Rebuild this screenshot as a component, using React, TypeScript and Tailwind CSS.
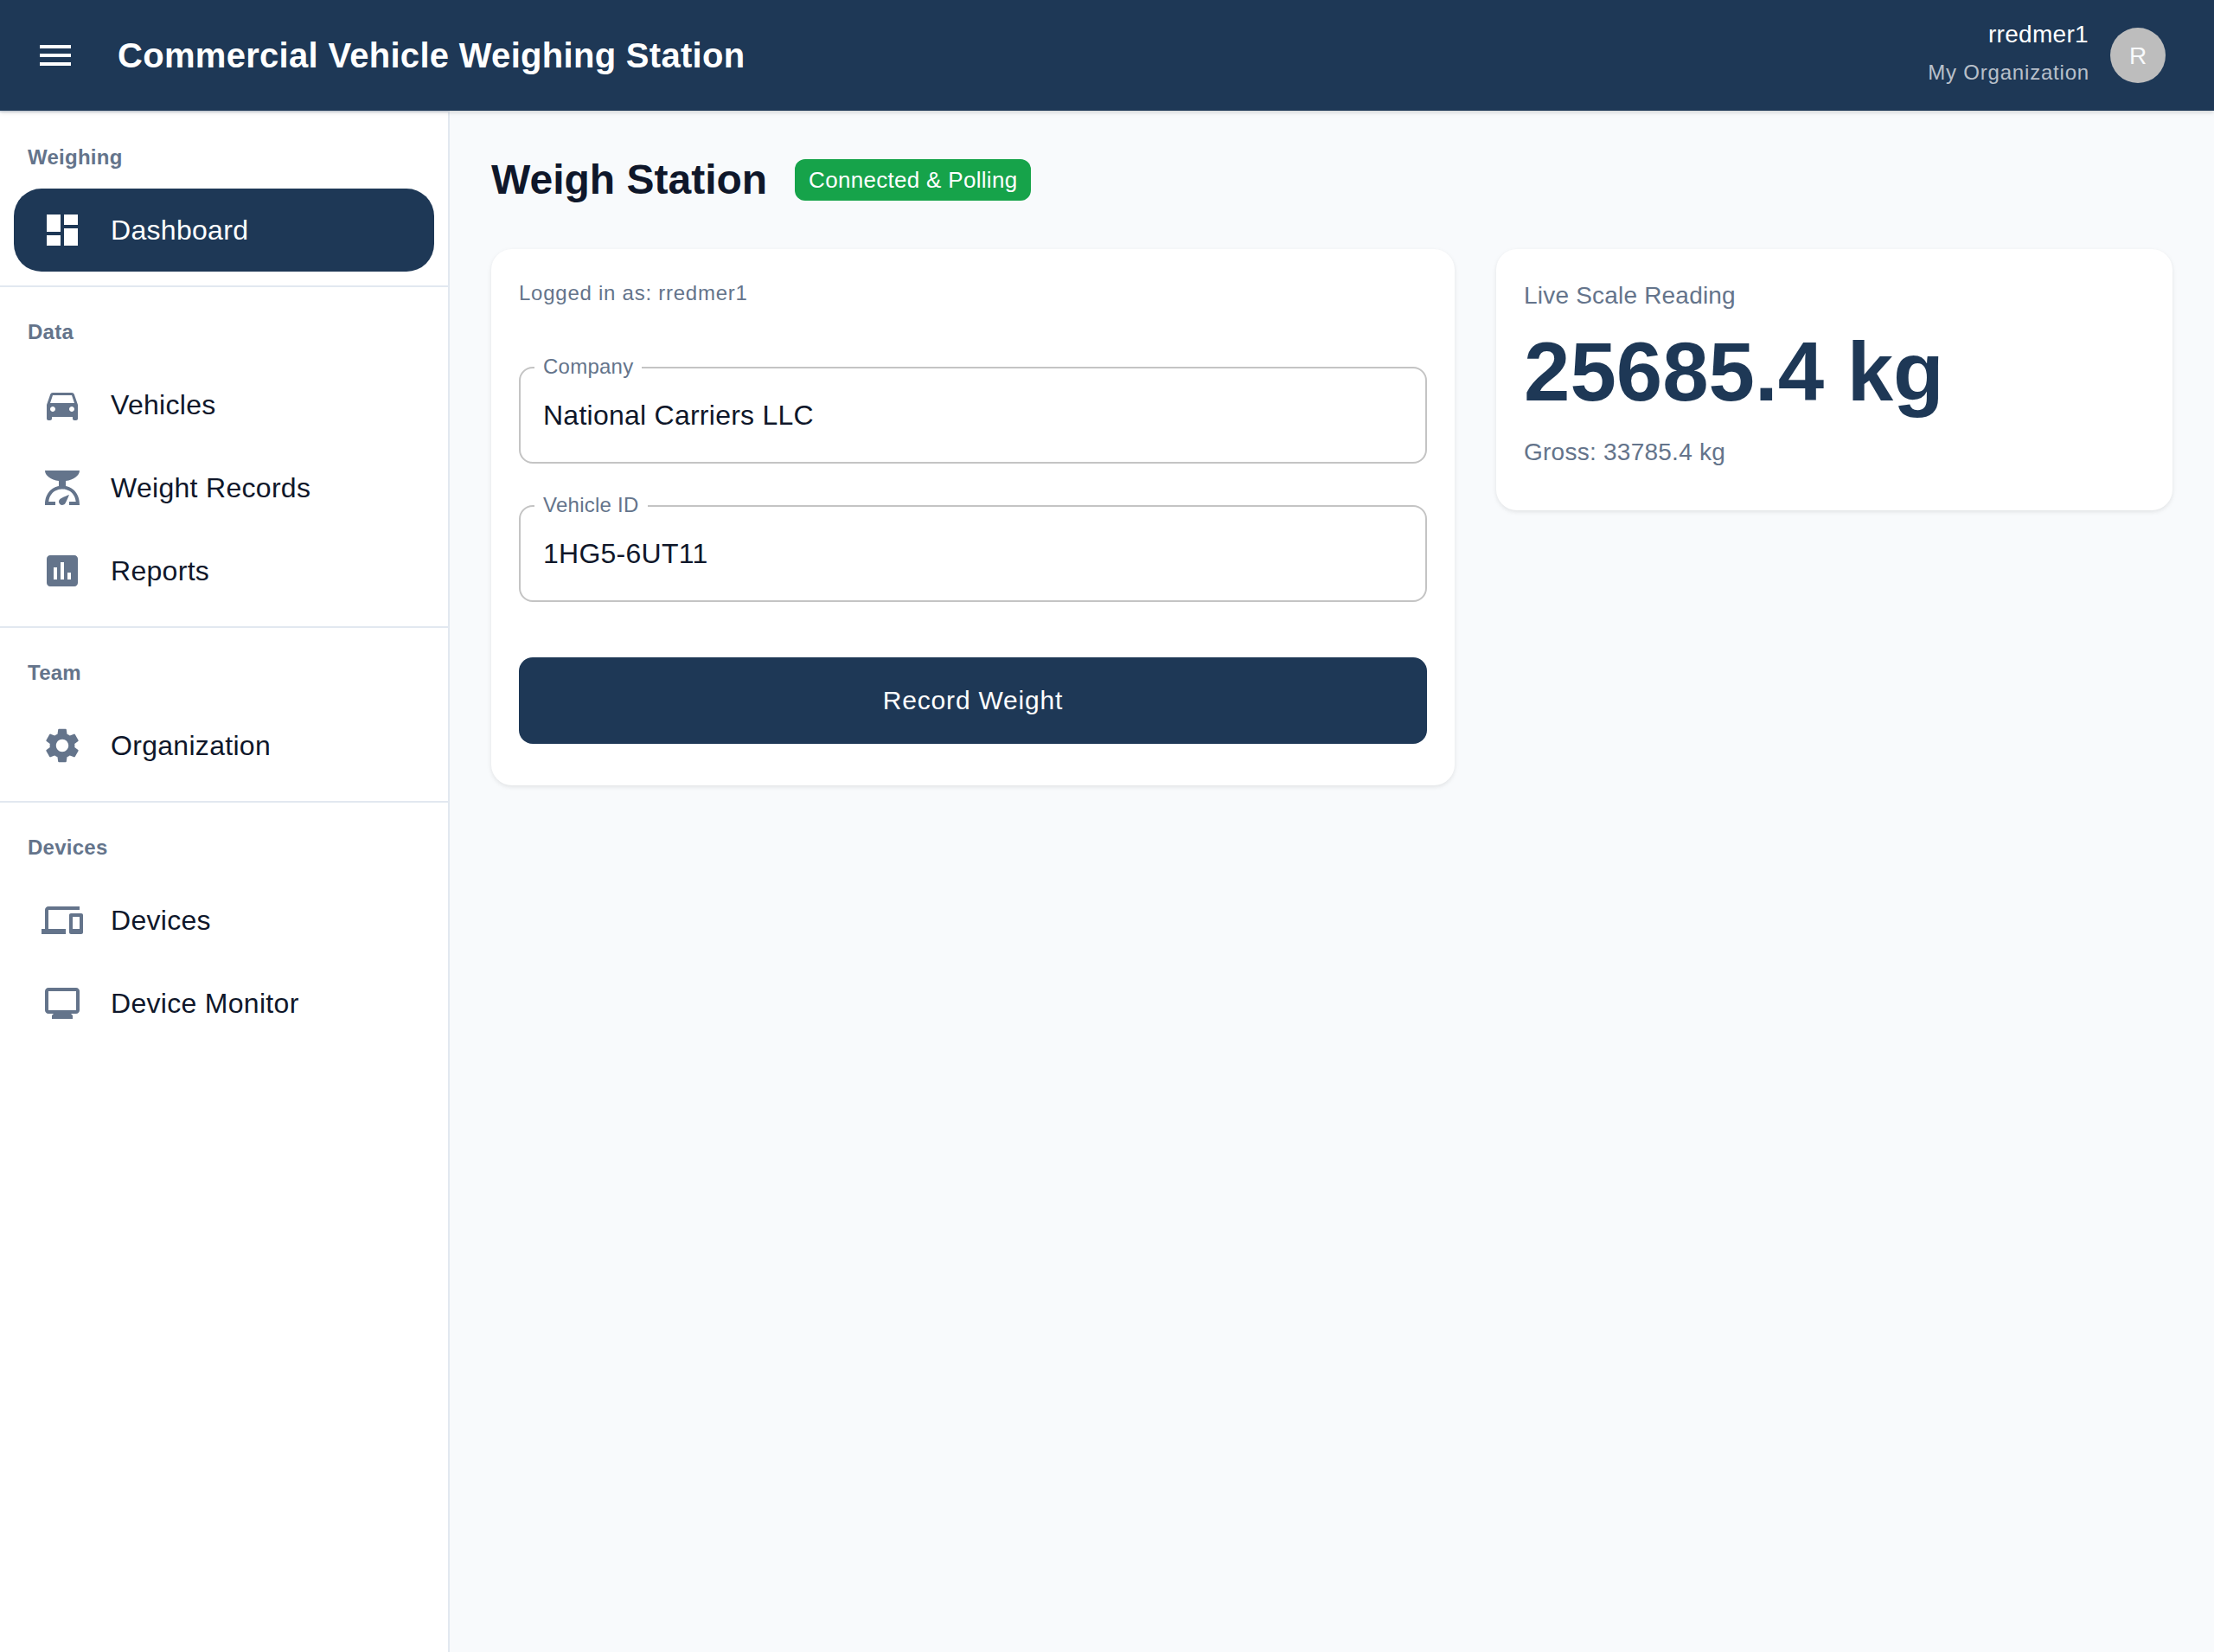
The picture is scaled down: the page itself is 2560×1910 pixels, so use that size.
import type { IconType } from "react-icons"
import {
  MdAssessment,
  MdDashboard,
  MdDevices,
  MdDirectionsCar,
  MdMenu,
  MdMonitor,
  MdScale,
  MdSettings,
} from "react-icons/md"

type NavItem = { label: string; icon: IconType; active?: boolean }
type NavSection = { title: string; items: NavItem[] }

const sections: NavSection[] = [
  { title: "Weighing", items: [{ label: "Dashboard", icon: MdDashboard, active: true }] },
  {
    title: "Data",
    items: [
      { label: "Vehicles", icon: MdDirectionsCar },
      { label: "Weight Records", icon: MdScale },
      { label: "Reports", icon: MdAssessment },
    ],
  },
  { title: "Team", items: [{ label: "Organization", icon: MdSettings }] },
  {
    title: "Devices",
    items: [
      { label: "Devices", icon: MdDevices },
      { label: "Device Monitor", icon: MdMonitor },
    ],
  },
]

function Header() {
  return (
    <header className="relative z-10 flex h-32 items-center justify-between bg-[#1e3856] pr-14 pl-10 text-white shadow-[0_2px_6px_rgba(0,0,0,0.1),0_2px_4px_rgba(0,0,0,0.06)]">
      <div className="flex items-center">
        <button aria-label="Toggle menu">
          <MdMenu className="size-12" />
        </button>
        <h1 className="ml-12 text-[40px] leading-[64px] font-bold tracking-[0.3px]">
          Commercial Vehicle Weighing Station
        </h1>
      </div>
      <div className="flex items-center gap-6">
        <div className="pb-1 text-right">
          <p className="pr-px text-[28px] leading-[40px] tracking-[0.3px]">rredmer1</p>
          <p className="mt-1 text-2xl leading-[40px] tracking-[0.8px] text-white/70">My Organization</p>
        </div>
        <div className="flex size-16 items-center justify-center rounded-full bg-[#bdbdbd] pt-0.5 text-[28px] text-[#f8fafc]">
          R
        </div>
      </div>
    </header>
  )
}

function Sidebar() {
  return (
    <aside className="w-[520px] shrink-0 border-t-2 border-r-2 border-[#e2e8f0] bg-white">
      {sections.map((section, i) => (
        <div key={section.title} className={i < sections.length - 1 ? "border-b-2 border-[#e2e8f0] pb-4" : "pb-4"}>
          <h2 className="h-[88px] px-8 pt-8 text-2xl leading-[40px] font-bold tracking-[0.25px] text-[#64748b]">
            {section.title}
          </h2>
          <nav className="px-4">
            {section.items.map(({ label, icon: Icon, active }) => (
              <a
                key={label}
                className={
                  active
                    ? "flex h-24 items-center gap-8 rounded-[32px] bg-[#1e3856] px-8 text-white"
                    : "flex h-24 items-center gap-8 rounded-[32px] px-8 text-[#0f172a]"
                }
              >
                <Icon className={active ? "size-12 text-white" : "size-12 text-[#64748b]"} />
                <span className="text-[32px] leading-[48px] tracking-[0.3px]">{label}</span>
              </a>
            ))}
          </nav>
        </div>
      ))}
    </aside>
  )
}

// Outlined text field, the legend cuts the notch in the border
function Field({ label, value }: { label: string; value: string }) {
  return (
    <fieldset className="-mt-[11px] h-[123px] rounded-2xl border-2 border-[#c4c4c4] px-4">
      <legend className="h-6 px-[10px] text-2xl leading-[22px] tracking-[0.25px] text-[#64748b]">{label}</legend>
      <p className="mt-5 pl-[10px] text-[32px] leading-[46px] tracking-[0.25px] text-[#0f172a]">{value}</p>
    </fieldset>
  )
}

function RecordCard() {
  return (
    <section className="h-[620px] w-[1114px] rounded-3xl bg-white p-8 shadow-[0_2px_6px_rgba(0,0,0,0.06),0_2px_4px_rgba(0,0,0,0.04)]">
      <p className="h-10 text-2xl leading-[38px] tracking-[0.75px] text-[#64748b]">Logged in as: rredmer1</p>
      <div className="mt-16 flex flex-col gap-12">
        <Field label="Company" value="National Carriers LLC" />
        <Field label="Vehicle ID" value="1HG5-6UT11" />
      </div>
      <button className="mt-16 h-[100px] w-full rounded-2xl bg-[#1e3856] pb-0.5 text-[30px] tracking-[0.8px] text-white">
        Record Weight
      </button>
    </section>
  )
}

function ScaleCard() {
  return (
    <section className="h-[302px] w-[782px] rounded-3xl bg-white p-8 shadow-[0_2px_6px_rgba(0,0,0,0.06),0_2px_4px_rgba(0,0,0,0.04)]">
      <p className="text-[28px] leading-[44px] tracking-[0.2px] text-[#64748b]">Live Scale Reading</p>
      <p className="mt-1 text-[96px] leading-[124px] font-bold text-[#1e3856]">25685.4 kg</p>
      <p className="mt-[9px] text-[28px] leading-[44px] tracking-[0.25px] text-[#64748b]">Gross: 33785.4 kg</p>
    </section>
  )
}

export default function App() {
  return (
    <div className="flex h-[1910px] w-[2560px] flex-col overflow-hidden bg-[#f8fafc] font-['Liberation_Sans',Arial,sans-serif]">
      <Header />
      <div className="flex flex-1">
        <Sidebar />
        <main className="flex-1 p-12">
          <div className="flex h-16 items-center gap-8">
            <h2 className="text-5xl font-bold text-[#0f172a]">Weigh Station</h2>
            <span className="flex h-12 items-center rounded-xl bg-[#16a34a] px-4 text-[26px] tracking-[0.3px] text-white">
              Connected &amp; Polling
            </span>
          </div>
          <div className="mt-12 flex items-start gap-12">
            <RecordCard />
            <ScaleCard />
          </div>
        </main>
      </div>
    </div>
  )
}
